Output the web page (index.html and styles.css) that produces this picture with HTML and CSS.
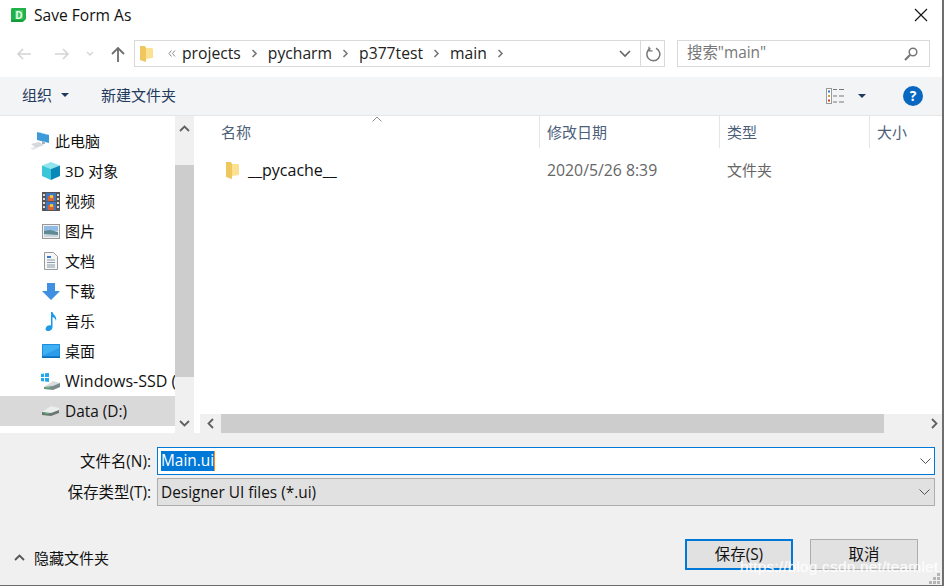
FILE: index.html
```html
<!DOCTYPE html>
<html lang="zh">
<head>
<meta charset="utf-8">
<title>Save Form As</title>
<link rel="stylesheet" href="styles.css">
</head>
<body>
<div class="window">
  <header class="titlebar">
    <svg class="app-icon" width="16" height="14" viewBox="0 0 16 14"><path d="M1 0h14v11l-3 3H0V1z" fill="#21b14b"/><path d="M0 12h12l-1 2H1z" fill="#149a3a"/><rect x="4" y="2" width="8" height="9" fill="#6ddc8c" opacity=".45"/><text x="8" y="10.500" text-anchor="middle" class="app-letter">D</text></svg>
    <span class="title">Save Form As</span>
    <svg class="close" width="14" height="14" viewBox="0 0 14 14"><path d="M1 1l12 12M13 1L1 13" stroke="#111" stroke-width="1.100" fill="none"/></svg>
  </header>

  <nav class="navbar">
    <svg class="nav-back" width="16" height="14" viewBox="0 0 16 14"><path d="M15 7H2M7 2L2 7l5 5" stroke="#d4d4d4" stroke-width="1.600" fill="none"/></svg>
    <svg class="nav-forward" width="16" height="14" viewBox="0 0 16 14"><path d="M1 7h13M9 2l5 5-5 5" stroke="#d4d4d4" stroke-width="1.600" fill="none"/></svg>
    <svg class="nav-drop" width="8" height="5" viewBox="0 0 8 5"><path d="M1 1l3 3 3-3" stroke="#d4d4d4" stroke-width="1.300" fill="none"/></svg>
    <svg class="nav-up" width="14" height="16" viewBox="0 0 14 16"><path d="M7 16V2M1 8l6-6 6 6" stroke="#6d6d6d" stroke-width="1.800" fill="none"/></svg>
    <div class="address">
      <svg class="crumb-folder" width="13" height="17" viewBox="0 0 13 17"><path d="M0 1h5l1 2v14l-6-2z" fill="#f0c75e"/><path d="M6 3h6l1 1v9l-7 1z" fill="#fbe190"/></svg>
      <svg class="crumb-more" width="8" height="7" viewBox="0 0 8 7"><path d="M3.500.500L1 3.500l2.500 3M7 .500L4.500 3.500 7 6.500" stroke="#888" fill="none"/></svg>
      <span class="crumb">projects</span>
      <svg class="sep" width="27" height="9" viewBox="0 0 27 9"><path d="M11.500 1l3.500 3.500L11.500 8" stroke="#777" stroke-width="1.600" fill="none"/></svg>
      <span class="crumb">pycharm</span>
      <svg class="sep" width="27" height="9" viewBox="0 0 27 9"><path d="M11.500 1l3.500 3.500L11.500 8" stroke="#777" stroke-width="1.600" fill="none"/></svg>
      <span class="crumb">p377test</span>
      <svg class="sep" width="27" height="9" viewBox="0 0 27 9"><path d="M11.500 1l3.500 3.500L11.500 8" stroke="#777" stroke-width="1.600" fill="none"/></svg>
      <span class="crumb">main</span>
      <svg class="sep" width="27" height="9" viewBox="0 0 27 9"><path d="M11.500 1l3.500 3.500L11.500 8" stroke="#777" stroke-width="1.600" fill="none"/></svg>
      <svg class="addr-chevron" width="12" height="8" viewBox="0 0 12 8"><path d="M1 1l5 5 5-5" stroke="#666" stroke-width="1.600" fill="none"/></svg>
      <div class="refresh">
        <svg width="16" height="16" viewBox="0 0 16 16"><path d="M5.500 2.400A6.500 6.500 0 1 0 11 2.300" stroke="#777" stroke-width="1.500" fill="none"/><path d="M4 .800v4h3.600" stroke="#777" stroke-width="1.300" fill="none"/></svg>
      </div>
    </div>
    <div class="search">
      <span class="search-text">搜索"main"</span>
      <svg width="14" height="14" viewBox="0 0 14 14"><circle cx="9" cy="5" r="3.800" stroke="#777" stroke-width="1.500" fill="none"/><path d="M6 8l-5 5" stroke="#777" stroke-width="2.200"/></svg>
    </div>
  </nav>

  <div class="toolbar">
    <span class="tool">组织</span>
    <span class="caret tool-caret"></span>
    <span class="tool new-folder">新建文件夹</span>
    <svg class="view-icon" width="19" height="16" viewBox="0 0 19 16"><rect x=".5" y=".5" width="5" height="15" fill="#fff" stroke="#9a9a9a"/><rect x="2" y="2.500" width="2" height="2" fill="#3c78c8"/><rect x="2" y="7" width="2" height="2" fill="#c9a13a"/><rect x="2" y="11.500" width="2" height="2" fill="#c93a2a"/><path d="M7 1.500h4M13 1.500h5M7 8h4M13 8h5M7 14h4M13 14h5" stroke="#777" stroke-width="1"/></svg>
    <span class="caret view-caret"></span>
    <span class="help">?</span>
  </div>

  <main class="main">
    <aside class="sidebar">
      <ul class="tree">
        <li class="row top">
          <svg width="20" height="18" viewBox="0 0 20 18"><path d="M7 0l12 3v8L7 8z" fill="#3d9bd8"/><path d="M7 0l2 0 10 3-1 0z" fill="#8ccbf0"/><path d="M12 9h3v3h-3z" fill="#9fb4c4"/><path d="M1 12l8-2 5 3-8 3z" fill="#d5d8dc"/><path d="M0 16l5-1 3 1-5 2z" fill="#e4e6e8"/></svg>
          <span>此电脑</span>
        </li>
        <li class="row">
          <svg width="18" height="18" viewBox="0 0 18 18"><path d="M9 0l9 3.500L9 7 0 3.500z" fill="#8fe4ee"/><path d="M0 3.500L9 7v11L0 14z" fill="#39c6d8"/><path d="M18 3.500L9 7v11l9-4z" fill="#0a88b8"/></svg>
          <span>3D 对象</span>
        </li>
        <li class="row">
          <svg width="18" height="19" viewBox="0 0 18 19"><rect width="18" height="19" fill="#555"/><path d="M1 2h2v2H1zM1 6h2v2H1zM1 10h2v2H1zM1 14h2v2H1zM15 2h2v2h-2zM15 6h2v2h-2zM15 10h2v2h-2zM15 14h2v2h-2z" fill="#ddd"/><rect x="4" y="1" width="10" height="8" fill="#3d78c8"/><rect x="4" y="10" width="10" height="8" fill="#3d78c8"/><path d="M6 4h6v5H6zM6 13h6v5H6z" fill="#d4643a"/><path d="M8 3h3v3H8zM8 12h3v3H8z" fill="#e8c83a"/></svg>
          <span>视频</span>
        </li>
        <li class="row">
          <svg width="18" height="15" viewBox="0 0 18 15"><rect x=".5" y=".5" width="17" height="14" fill="#eef2f4" stroke="#999"/><rect x="2" y="2" width="14" height="5" fill="#8fbbe4"/><path d="M2 7l6-1 8 2v5H2z" fill="#5d8a94"/><path d="M2 10l14 1v2H2z" fill="#c9d7dc"/></svg>
          <span>图片</span>
        </li>
        <li class="row">
          <svg width="18" height="18" viewBox="0 0 18 18"><path d="M2.500.500h9l4 4v13h-13z" fill="#f4f6f8" stroke="#9a9a9a"/><path d="M5 4h4v2H5z" fill="#3c78c8"/><path d="M5 8h8M5 10.500h8M5 13h8M5 15h8" stroke="#8a98a6"/></svg>
          <span>文档</span>
        </li>
        <li class="row">
          <svg width="18" height="17" viewBox="0 0 18 17"><path d="M5 0h8v8h5l-9 9-9-9h5z" fill="#3f90e2"/></svg>
          <span>下载</span>
        </li>
        <li class="row">
          <svg width="18" height="19" viewBox="0 0 18 19"><path d="M9 0h1.500c.3 3 5 4 3.500 9-.5-3-2.500-3.500-3.500-4v10c0 2.500-2 4-4.500 4S3 17.500 4 15.500 7 13 9 13.500z" fill="#1b9ae8"/></svg>
          <span>音乐</span>
        </li>
        <li class="row">
          <svg width="18" height="14" viewBox="0 0 18 14"><rect width="18" height="13" rx=".5" fill="#1b8de0"/><rect x="1" y="1" width="16" height="10.500" fill="#3fb0f2"/><path d="M1 11.500L17 4v7.500z" fill="#2d9ce8"/><rect y="12.500" width="18" height="1.500" fill="#0a6fb8"/></svg>
          <span>桌面</span>
        </li>
        <li class="row">
          <svg width="20" height="17" viewBox="0 0 20 17"><path d="M0 1l3-.5V4H0zM4 .3L8 0v4H4zM0 5h3v3.500L0 8zM4 5h4v4l-4-.4z" fill="#1fa8ee"/><path d="M3 14l9-6 7 2v4l-7 3z" fill="#d8dcdc"/><path d="M3 14l9-1 7-3v4l-7 3-9-1z" fill="#7a8a8a"/><rect x="5" y="14" width="4" height="1" fill="#45d05a"/></svg>
          <span class="ssd">Windows-SSD (</span>
        </li>
        <li class="row selected">
          <svg width="20" height="12" viewBox="0 0 20 12"><path d="M1 7l9-6 8 2v4l-8 3z" fill="#eceeee"/><path d="M1 7l9 1 8-3v3l-8 3-9-1z" fill="#6a7676"/><rect x="4" y="8" width="4" height="1" fill="#3fc85a"/></svg>
          <span class="data">Data (D:)</span>
        </li>
      </ul>
      <div class="vscroll">
        <span class="arrow-v"><svg width="11" height="7" viewBox="0 0 11 7"><path d="M1 6l4.500-4.500L10 6" stroke="#606060" stroke-width="1.800" fill="none"/></svg></span>
        <span class="vthumb"></span>
        <span class="arrow-v bottom-arrow"><svg width="11" height="7" viewBox="0 0 11 7"><path d="M1 1l4.500 4.500L10 1" stroke="#606060" stroke-width="1.800" fill="none"/></svg></span>
      </div>
    </aside>

    <section class="files">
      <div class="columns">
        <svg class="sort" width="10" height="6" viewBox="0 0 10 6"><path d="M.5 5.500L5 1l4.500 4.500" stroke="#8a8a8a" fill="none"/></svg>
        <span class="col col-name">名称</span>
        <span class="col col-date">修改日期</span>
        <span class="col col-type">类型</span>
        <span class="col col-size">大小</span>
      </div>
      <div class="file-row">
        <svg class="file-folder" width="13" height="18" viewBox="0 0 13 18"><path d="M0 1h5l1 2v15l-6-2z" fill="#f0c75e"/><path d="M6 3h6l1 1v10l-7 1z" fill="#fbe190"/></svg>
        <span class="f-name">__pycache__</span>
        <span class="f-date">2020/5/26 8:39</span>
        <span class="f-type">文件夹</span>
      </div>
      <div class="hscroll">
        <span class="arrow-h"><svg width="7" height="11" viewBox="0 0 7 11"><path d="M6 1L1.500 5.500 6 10" stroke="#606060" stroke-width="1.800" fill="none"/></svg></span>
        <span class="hthumb"></span>
        <span class="arrow-h right-arrow"><svg width="7" height="11" viewBox="0 0 7 11"><path d="M1 1l4.500 4.500L1 10" stroke="#606060" stroke-width="1.800" fill="none"/></svg></span>
      </div>
    </section>
  </main>

  <footer class="footer">
    <div class="fields">
      <label class="field-label">文件名(N):</label>
      <div class="input"><span class="selection">Main.ui</span><span class="cursor"></span>
        <svg class="combo-chevron" width="11" height="6" viewBox="0 0 11 6"><path d="M.5.500l5 5 5-5" stroke="#555" fill="none"/></svg>
      </div>
      <label class="field-label">保存类型(T):</label>
      <div class="select"><span class="select-value">Designer UI files (*.ui)</span>
        <svg class="combo-chevron" width="11" height="6" viewBox="0 0 11 6"><path d="M.5.500l5 5 5-5" stroke="#555" fill="none"/></svg>
      </div>
    </div>
    <div class="actions">
      <div class="hide-folders">
        <svg width="11" height="7" viewBox="0 0 11 7"><path d="M1 6l4.500-4.500L10 6" stroke="#555" stroke-width="1.800" fill="none"/></svg>
        <span class="hide-label">隐藏文件夹</span>
      </div>
      <button class="btn primary">保存(S)</button>
      <button class="btn cancel">取消</button>
    </div>
    <svg class="grip" width="12" height="12" viewBox="0 0 12 12"><path d="M8 0h3v3H8zM4 4h3v3H4zM8 4h3v3H8zM0 8h3v3H0zM4 8h3v3H4zM8 8h3v3H8z" fill="#b5b5b5"/></svg>
  </footer>
  <div class="watermark">https://blog.csdn.net/teamlet</div>
</div>
</body>
</html>
```

FILE: styles.css
```css
* { box-sizing: border-box; }
html, body { margin: 0; padding: 0; background: #fff; }
body {
  width: 947px;
  height: 587px;
  overflow: hidden;
  font-family: "Open Sans", "Noto Sans CJK SC", sans-serif;
  font-size: 15.400px;
  color: #111;
}
.window {
  position: relative;
  width: 944px;
  height: 586px;
  border-right: 2px solid #6e6e6e;
  border-bottom: 1px solid #6e6e6e;
  display: flex;
  flex-direction: column;
  background: #fff;
  overflow: hidden;
}
.titlebar {
  height: 30px;
  flex: none;
  display: flex;
  align-items: center;
  padding-left: 11px;
}
.app-icon { margin-right: 7px; }
.app-letter { font: 700 10px "Open Sans", sans-serif; fill: #e8ffe8; }
.title { font-size: 15.600px; line-height: 30px; }
.close { margin-left: auto; margin-right: 14px; }

.navbar {
  height: 47px;
  flex: none;
  display: flex;
  align-items: center;
}
.nav-back { margin-left: 16px; }
.nav-forward { margin-left: 22px; }
.nav-drop { margin-left: 16px; }
.nav-up { margin-left: 17px; }
.address {
  margin-left: 9px;
  width: 531px;
  height: 27px;
  border: 1px solid #d9d9d9;
  display: flex;
  align-items: center;
  padding-left: 5px;
  position: relative;
  color: #222;
}
.crumb-folder { margin-right: 15px; }
.crumb-more { margin-right: 6px; }
.crumb { color: #222; font-size: 15.700px; line-height: 24px; margin-top: -2px; }
.sep { flex: none; }
.addr-chevron { margin-left: auto; margin-right: 9px; }
.refresh {
  width: 24px;
  height: 100%;
  border-left: 1px solid #d9d9d9;
  display: flex;
  align-items: center;
  justify-content: center;
}
.search {
  margin-left: 12px;
  width: 253px;
  height: 27px;
  border: 1px solid #d9d9d9;
  display: flex;
  align-items: center;
  justify-content: space-between;
  padding: 0 11px 0 9px;
}
.search-text { color: #777; line-height: 24px; margin-top: -2px; }

.toolbar {
  height: 39px;
  flex: none;
  background: #f3f4f6;
  border-bottom: 1px solid #e6e6e6;
  display: flex;
  align-items: center;
  padding-left: 22px;
}
.tool { color: #1f3a5c; font-size: 15px; line-height: 22px; margin-top: -2px; }
.caret {
  width: 0;
  height: 0;
  border-left: 4px solid transparent;
  border-right: 4px solid transparent;
  border-top: 4px solid #1f3a5c;
}
.tool-caret { margin-left: 9px; margin-top: -2px; }
.new-folder { margin-left: 32px; }
.view-icon { margin-left: auto; margin-top: -1px; }
.view-caret { margin-left: 13px; margin-top: -1px; }
.help {
  margin-left: 37px;
  margin-right: 19px;
  width: 20px;
  height: 20px;
  border-radius: 50%;
  background: #0867c0;
  color: #fff;
  font-weight: 700;
  font-size: 14px;
  line-height: 20px;
  text-align: center;
}

.main {
  height: 317px;
  flex: none;
  display: flex;
}
.sidebar {
  width: 200px;
  flex: none;
  display: flex;
}
.tree {
  list-style: none;
  margin: 0;
  padding: 10px 0 0;
  width: 175px;
  flex: none;
  overflow: hidden;
}
.row {
  height: 30px;
  display: flex;
  align-items: center;
  padding-left: 41px;
  gap: 4px;
  white-space: nowrap;
  color: #111;
  font-size: 15px;
}
.row span { line-height: 22px; }
.row svg { width: 20px; flex: none; }
.row.top { padding-left: 30px; gap: 6px; }
.row.top span { margin-left: -1px; }
.row.selected { background: #d9d9d9; }
.row .ssd { font-size: 16px; overflow: hidden; }
.row .data { font-size: 15.400px; margin-top: 1px; }
.vscroll {
  width: 19px;
  height: 317px;
  flex: none;
  background: #f0f0f0;
  display: flex;
  flex-direction: column;
  align-items: center;
}
.arrow-v {
  height: 24px;
  display: flex;
  align-items: center;
  justify-content: center;
  flex: none;
}
.vthumb { width: 100%; height: 212px; margin-top: 25px; background: #cdcdcd; flex: none; }
.bottom-arrow { margin-top: auto; height: 20px; }

.files {
  flex: 1;
  min-width: 0;
  display: flex;
  flex-direction: column;
  position: relative;
}
.columns {
  height: 32px;
  flex: none;
  position: relative;
  display: flex;
}
.col {
  color: #4c607a;
  font-size: 15px;
  line-height: 32px;
  padding-left: 7px;
  border-right: 1px solid #e5e5e5;
  flex: none;
}
.col-name { width: 340px; padding-left: 21px; }
.col-date { width: 180px; }
.col-type { width: 150px; }
.col-size { border-right: 0; }
.sort { position: absolute; left: 172px; top: 0; }
.file-row {
  height: 30px;
  margin-top: 7px;
  flex: none;
  display: flex;
  align-items: center;
  padding-left: 26px;
  color: #111;
}
.file-folder { flex: none; }
.f-name { margin-left: 9px; width: 299px; color: #111; font-size: 16px; line-height: 24px; }
.f-date { width: 180px; color: #666; font-size: 15.800px; line-height: 24px; }
.f-type { color: #666; font-size: 15px; line-height: 24px; }
.hscroll {
  margin-top: auto;
  height: 19px;
  flex: none;
  background: #f0f0f0;
  display: flex;
  align-items: center;
}
.arrow-h { width: 21px; display: flex; align-items: center; justify-content: center; flex: none; }
.hthumb { width: 663px; height: 100%; background: #cdcdcd; flex: none; }
.right-arrow { margin-left: auto; width: 16px; }

.footer {
  flex: 1;
  background: #f0f0f0;
  position: relative;
  padding-top: 14px;
  display: flex;
  flex-direction: column;
}
.fields {
  display: grid;
  grid-template-columns: 151px 778px;
  grid-auto-rows: 28px;
  column-gap: 6px;
  row-gap: 3px;
}
.field-label {
  text-align: right;
  line-height: 30px;
  color: #111;
  white-space: nowrap;
}
.input, .select {
  position: relative;
  display: flex;
  align-items: center;
  padding-left: 3px;
}
.input { border: 1px solid #0078d7; background: #fff; }
.select { border: 1px solid #adadad; background: #e1e1e1; color: #111; }
.select-value { margin-top: 1px; }
.selection { background: #0078d7; color: #fff; line-height: 20px; font-size: 15.400px; }
.cursor { width: 1px; height: 20px; background: #ff8c1a; }
.combo-chevron { margin-left: auto; margin-right: 4px; }
.input .combo-chevron { margin-right: 3px; }
.actions {
  margin-top: 33px;
  display: flex;
  align-items: center;
  height: 31px;
}
.hide-folders {
  display: flex;
  align-items: center;
  padding: 6px 0 0 14px;
  gap: 9px;
  color: #111;
  width: 685px;
}
.hide-label { font-size: 15px; }
.btn {
  width: 108px;
  height: 31px;
  font: inherit;
  color: #111;
  background: #e1e1e1;
  border: 1px solid #adadad;
  padding: 0 0 2px;
}
.primary { border: 2px solid #0078d7; }
.cancel { margin-left: 17px; }
.grip { position: absolute; right: 1px; bottom: 0; }
.watermark {
  position: absolute;
  left: 740px;
  top: 557px;
  font-family: "Liberation Sans", sans-serif;
  font-size: 15.500px;
  line-height: 20px;
  color: rgba(255, 255, 255, 0.8);
  letter-spacing: 0.150px;
  text-shadow: 0 0 1px rgba(255, 255, 255, 0.5);
  white-space: nowrap;
}
```
